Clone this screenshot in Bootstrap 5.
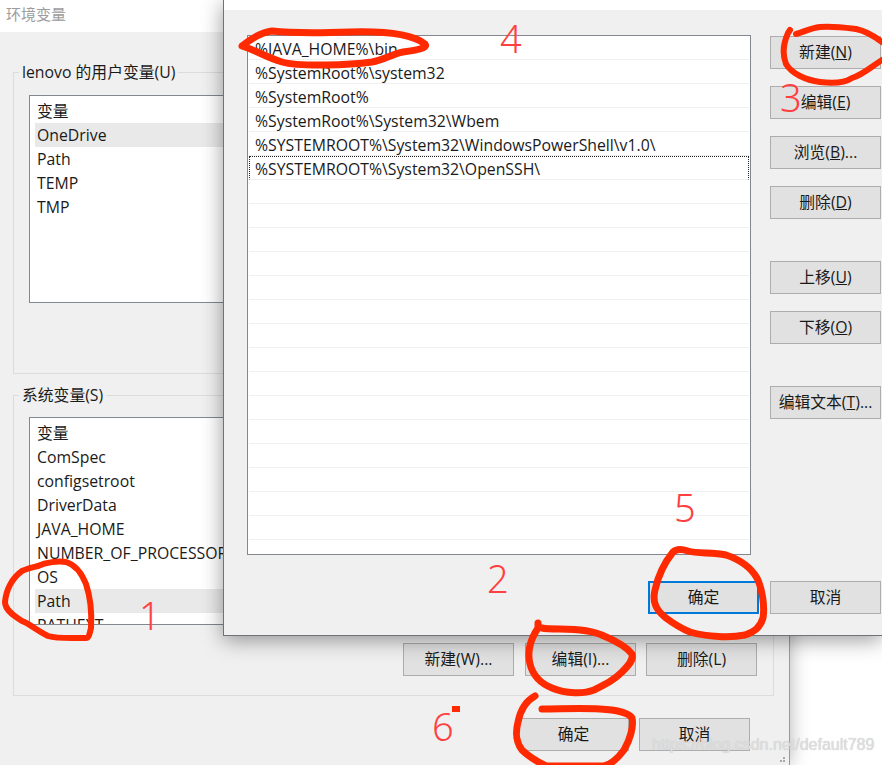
<!DOCTYPE html>
<html lang="zh"><head><meta charset="utf-8"><title>环境变量</title>
<link href="https://cdn.jsdelivr.net/npm/bootstrap@5.3.0/dist/css/bootstrap.min.css" rel="stylesheet">
<style>
html,body{margin:0;height:765px;overflow:hidden;background:#fff}
body{position:relative;font:15.8px/24px "Open Sans","Noto Sans CJK SC",sans-serif;color:#1a1a1a;width:882px}
.win-back{position:absolute;left:0;top:0;width:790px;height:765px;background:#f0f0f0;border-right:1px solid #9a9a9a;box-shadow:0 0 18px rgba(0,0,0,.3)}
.win-title{height:32px;background:#fff;padding:2px 6px;color:#9c9c9c;line-height:24px;font-size:15px}
.grp{position:relative;margin-left:13px;width:761px;border:1px solid #dcdcdc;padding:22px 15px 0}
.grp-a{height:302px;margin-top:40px}
.grp-b{height:301px;margin-top:21px;padding-top:21px}
.grp-label{position:absolute;left:5px;top:-13px;background:#f0f0f0;padding:0 3px}
.lst{border:1px solid #828790;background:#fff;width:720px;height:208px;overflow:hidden;padding:3px 5px 0}
.lst-row{height:24px;padding-left:2px;white-space:nowrap}
.lst-sel{background:#e9e9e9}
.wbtn{width:111px;height:33px;background:#e1e1e1;border:1px solid #adadad;color:#1a1a1a;font-size:15.8px;line-height:28px;text-align:center;white-space:nowrap;padding:0 0 2px}
.btns-b{margin:18px 0 0 0;padding-right:1px;gap:10px}
.btns-b .wbtn:first-child{margin-right:1px}
.btns-foot{margin:22px 39px 0 0;gap:10px}
.win-front{position:absolute;left:223px;top:0;width:659px;height:636px;background:#f0f0f0;border-left:1px solid #6f7378;border-bottom:1px solid #6f7378;box-shadow:0 4px 20px rgba(0,0,0,.4)}
.win-front-top{height:10px;background:#fff}
.front-main{padding:25px 0 0 23px;gap:19px}
.path-list{width:504px;height:520px;border:1px solid #828790;background:#fff;padding:0 1px;overflow:hidden}
.path-row{height:24px;border-bottom:1px solid #f0f0f0;padding:2px 0 0 6px;white-space:nowrap;line-height:23px}
.path-focus{border-top:1px dotted #222;border-left:1px dotted #222;border-right:1px dotted #222;padding:1px 0 0 5px}
.side{width:111px;padding-top:1px}
.gap-s{margin-top:17px}
.gap-l{margin-top:42px}
.front-foot{margin:26px 0 0 424px;gap:11px}
.wbtn-def{border:2px solid #0078d7;width:111px}
.ink{position:absolute;left:0;top:0;width:882px;height:765px;pointer-events:none}
.digit{position:absolute;color:#ff4040;font:300 38px/40px "Noto Sans",sans-serif}
.wm{position:absolute;left:652px;top:734px;font:16px/22px "Liberation Sans",sans-serif;color:#dedede;text-shadow:0 0 1px #c4c4c4}
</style></head>
<body>
<div class="win-back d-flex flex-column">
  <div class="win-title">环境变量</div>
  <div class="grp grp-a"><span class="grp-label">lenovo 的用户变量(U)</span>
    <div class="lst">
      <div class="lst-row">变量</div><div class="lst-row lst-sel">OneDrive</div><div class="lst-row">Path</div><div class="lst-row">TEMP</div><div class="lst-row">TMP</div>
    </div>
  </div>
  <div class="grp grp-b"><span class="grp-label">系统变量(S)</span>
    <div class="lst">
      <div class="lst-row">变量</div><div class="lst-row">ComSpec</div><div class="lst-row">configsetroot</div><div class="lst-row">DriverData</div><div class="lst-row">JAVA_HOME</div><div class="lst-row">NUMBER_OF_PROCESSORS</div><div class="lst-row">OS</div><div class="lst-row lst-sel">Path</div><div class="lst-row">PATHEXT</div>
    </div>
    <div class="d-flex justify-content-end btns-b">
      <button class="wbtn">新建(W)...</button><button class="wbtn">编辑(I)...</button><button class="wbtn">删除(L)</button>
    </div>
  </div>
  <div class="d-flex justify-content-end btns-foot">
    <button class="wbtn">确定</button><button class="wbtn">取消</button>
  </div>
</div>

<div class="win-front">
  <div class="win-front-top"></div>
  <div class="d-flex front-main">
    <div class="path-list">
      <div class="path-row">%JAVA_HOME%\bin</div>
      <div class="path-row">%SystemRoot%\system32</div>
      <div class="path-row">%SystemRoot%</div>
      <div class="path-row">%SystemRoot%\System32\Wbem</div>
      <div class="path-row">%SYSTEMROOT%\System32\WindowsPowerShell\v1.0\</div>
      <div class="path-row path-focus">%SYSTEMROOT%\System32\OpenSSH\</div>
      <div class="path-row"></div><div class="path-row"></div><div class="path-row"></div><div class="path-row"></div><div class="path-row"></div><div class="path-row"></div><div class="path-row"></div><div class="path-row"></div><div class="path-row"></div><div class="path-row"></div><div class="path-row"></div><div class="path-row"></div><div class="path-row"></div><div class="path-row"></div><div class="path-row"></div>
    </div>
    <div class="side d-flex flex-column">
      <button class="wbtn">新建(<u>N</u>)</button>
      <button class="wbtn gap-s">编辑(<u>E</u>)</button>
      <button class="wbtn gap-s">浏览(<u>B</u>)...</button>
      <button class="wbtn gap-s">删除(<u>D</u>)</button>
      <button class="wbtn gap-l">上移(<u>U</u>)</button>
      <button class="wbtn gap-s">下移(<u>O</u>)</button>
      <button class="wbtn gap-l">编辑文本(<u>T</u>)...</button>
    </div>
  </div>
  <div class="d-flex front-foot">
    <button class="wbtn wbtn-def">确定</button><button class="wbtn">取消</button>
  </div>
</div>

<svg class="ink" viewBox="0 0 882 765" fill="none" stroke="#ff2a00" stroke-width="6" stroke-linecap="round" stroke-linejoin="round">
  <path stroke-width="7" d="M242 46C252 38 262 32 272 31C290 33 320 33 350 32C385 31 412 34 425 44C428 48 418 50 403 52C392 54 384 60 372 62C350 65 300 67 282 62C268 58 255 50 242 46Z"/>
  <path d="M790 30L788 33C784 42 782 54 786 64C792 74 806 80 820 82C836 84 846 82 852 78C864 74 872 66 882 60M796 34C804 32 810 28 820 27C834 26 848 28 856 29C866 31 874 36 882 42"/>
  <path d="M38 566C46 562 58 561 66 562C76 565 82 574 86 584C90 596 92 612 91 628C90 632 89 638 86 638C70 638 58 639 48 636C36 630 30 624 22 621C14 616 5 610 5 602C6 590 12 578 22 571C28 568 34 567 38 566Z"/>
  <path stroke-width="7" d="M673 552C665 562 658 576 655 590C652 602 656 610 666 618C674 624 680 628 690 632C708 637 730 638 745 635C754 632 760 628 763 618C765 606 762 588 757 578C750 566 738 559 726 555C712 552 698 554 688 551C682 549 676 549 673 552Z"/>
  <path stroke-width="7" d="M538 623V628C530 640 527 652 530 664C533 676 542 684 552 688C566 694 584 694 594 690C606 684 614 680 622 672C628 666 634 660 632 654C626 646 616 641 604 636C592 630 576 629 560 629C552 629 546 629 542 628"/>
  <path stroke-width="7" d="M535 696C524 702 520 712 518 722C515 734 516 742 522 750C530 758 538 762 546 766M546 766H604C612 764 618 758 624 750C630 740 634 726 632 718C628 712 616 710 600 709C580 708 560 709 542 709"/>
  <rect x="452" y="706" width="8" height="6" fill="#ff2a00" stroke="none"/>
  <g fill="#a8a8a8" stroke="none"><rect x="783" y="757" width="2" height="2"/><rect x="780" y="760" width="2" height="2"/><rect x="783" y="760" width="2" height="2"/></g>
</svg>
<span class="digit" style="left:139px;top:595px">1</span>
<span class="digit" style="left:487px;top:558px">2</span>
<span class="digit" style="left:780px;top:77px">3</span>
<span class="digit" style="left:500px;top:18px">4</span>
<span class="digit" style="left:674px;top:487px">5</span>
<span class="digit" style="left:432px;top:706px">6</span>
<span class="wm">https://blog.csdn.net/default789</span>
</body></html>
